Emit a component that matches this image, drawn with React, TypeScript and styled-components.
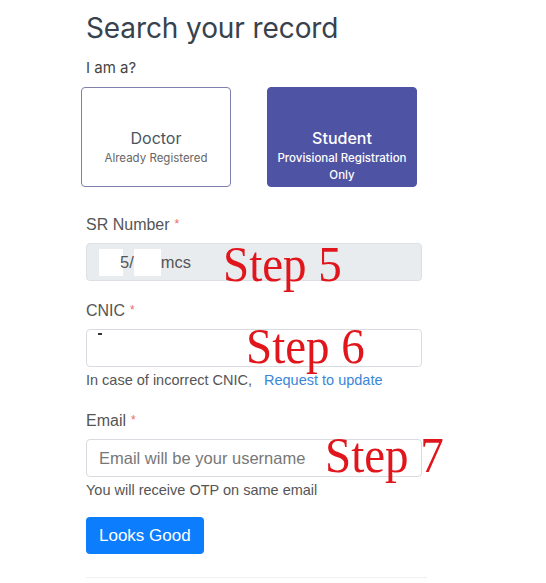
import React from 'react';
import styled, { createGlobalStyle } from 'styled-components';

const GlobalStyle = createGlobalStyle`
  html, body {
    margin: 0;
    padding: 0;
    background: #ffffff;
  }
  body {
    font-family: "Liberation Sans", Arial, sans-serif;
    color: #555;
  }
`;

const Page = styled.div`
  width: 336px;
  margin-left: 86px;
  padding-top: 9px;
`;

const Title = styled.h1`
  font-family: Inter, "Noto Sans", sans-serif;
  font-size: 28px;
  font-weight: 400;
  color: #38424e;
  margin: 0;
  line-height: 38px;
  letter-spacing: -0.1px;
`;

const Question = styled.div`
  font-family: Inter, "Noto Sans", sans-serif;
  font-size: 15px;
  color: #444;
  margin-top: 11px;
  line-height: 20px;
`;

const Choices = styled.div`
  display: flex;
  gap: 36px;
  margin-left: -5px;
  margin-top: 9px;
  margin-bottom: 27px;
`;

const Choice = styled.div<{ $active?: boolean }>`
  box-sizing: border-box;
  width: 150px;
  height: 100px;
  border-radius: 4px;
  border: 1.5px solid ${p => (p.$active ? '#4f53a3' : '#7f80ad')};
  background: ${p => (p.$active ? '#4f53a3' : '#fff')};
  color: ${p => (p.$active ? '#fff' : '#4a5563')};
  font-family: Inter, "Noto Sans", sans-serif;
  display: flex;
  flex-direction: column;
  align-items: center;
  padding: 40px 6px 0;
  text-align: center;
`;

const ChoiceTitle = styled.div<{ $active?: boolean }>`
  font-size: 16px;
  line-height: 20px;
  font-weight: ${p => (p.$active ? 500 : 400)};
`;

const ChoiceSub = styled.div<{ $active?: boolean }>`
  font-size: 11.5px;
  line-height: 17px;
  margin-top: 2px;
  font-weight: ${p => (p.$active ? 500 : 400)};
  color: ${p => (p.$active ? '#fff' : '#666')};
`;

const Field = styled.div`
  position: relative;
  margin-top: 19px;
`;

const Label = styled.div`
  font-size: 16px;
  line-height: 20px;
  color: #555;
  margin-bottom: 8px;
`;

const Req = styled.span`
  color: #e86a6a;
  font-size: 12px;
  margin-left: 5px;
  vertical-align: 2px;
`;

const Input = styled.div<{ $disabled?: boolean }>`
  box-sizing: border-box;
  height: 38px;
  border: 1px solid ${p => (p.$disabled ? '#dcdfe3' : '#d8dbe0')};
  border-radius: 4px;
  background: ${p => (p.$disabled ? '#e9ecef' : '#fff')};
  display: flex;
  align-items: center;
  padding: 0 12px;
  font-size: 16.5px;
  color: #555;
  position: relative;
`;

const Placeholder = styled.span`
  color: #777;
`;

const Redact = styled.span<{ $w: number }>`
  display: inline-block;
  width: ${p => p.$w}px;
  height: 27px;
  background: #fff;
`;

const Tick = styled.span`
  position: absolute;
  left: 11px;
  top: 3px;
  width: 4px;
  height: 1.5px;
  background: #333;
`;

const Help = styled.div`
  font-size: 14.5px;
  line-height: 18px;
  color: #555;
  margin-top: 4px;
  padding-bottom: 2px;
`;

const HelpLink = styled.a`
  color: #3a86d8;
  text-decoration: none;
  margin-left: 12px;
`;

const Step = styled.div<{ $left: number; $top: number }>`
  position: absolute;
  left: ${p => p.$left}px;
  top: ${p => p.$top}px;
  font-family: "Liberation Serif", "Times New Roman", serif;
  font-size: 47px;
  line-height: 38px;
  color: #e0161c;
  transform: scaleY(1.08);
  transform-origin: left bottom;
  white-space: nowrap;
  pointer-events: none;
`;

const Button = styled.button`
  margin-top: 16px;
  height: 37px;
  padding: 0 13px;
  background: #0b7dfd;
  border: none;
  border-radius: 4px;
  color: #fff;
  font-family: "Liberation Sans", Arial, sans-serif;
  font-size: 17px;
`;

const Divider = styled.div`
  margin-top: 23px;
  width: 341px;
  border-top: 1px solid #eef0f2;
`;

export default function App() {
  return (
    <>
      <GlobalStyle />
      <Page>
        <Title>Search your record</Title>
        <Question>I am a?</Question>
        <Choices>
          <Choice>
            <ChoiceTitle>Doctor</ChoiceTitle>
            <ChoiceSub>Already Registered</ChoiceSub>
          </Choice>
          <Choice $active>
            <ChoiceTitle $active>Student</ChoiceTitle>
            <ChoiceSub $active>Provisional Registration Only</ChoiceSub>
          </Choice>
        </Choices>

        <Field>
          <Label>
            SR Number<Req>*</Req>
          </Label>
          <Input $disabled>
            <Redact $w={24} />
            <span style={{ marginLeft: -3 }}>5/</span>
            <Redact $w={27} />
            <span>mcs</span>
          </Input>
          <Step $left={137} $top={32}>Step 5</Step>
        </Field>

        <Field>
          <Label>
            CNIC<Req>*</Req>
          </Label>
          <Input>
            <Tick />
          </Input>
          <Help>
            In case of incorrect CNIC,<HelpLink href="#">Request to update</HelpLink>
          </Help>
          <Step $left={160} $top={28}>Step 6</Step>
        </Field>

        <Field>
          <Label>
            Email<Req>*</Req>
          </Label>
          <Input>
            <Placeholder>Email will be your username</Placeholder>
          </Input>
          <Help>You will receive OTP on same email</Help>
          <Step $left={239} $top={27}>Step 7</Step>
        </Field>

        <Button>Looks Good</Button>
        <Divider />
      </Page>
    </>
  );
}
